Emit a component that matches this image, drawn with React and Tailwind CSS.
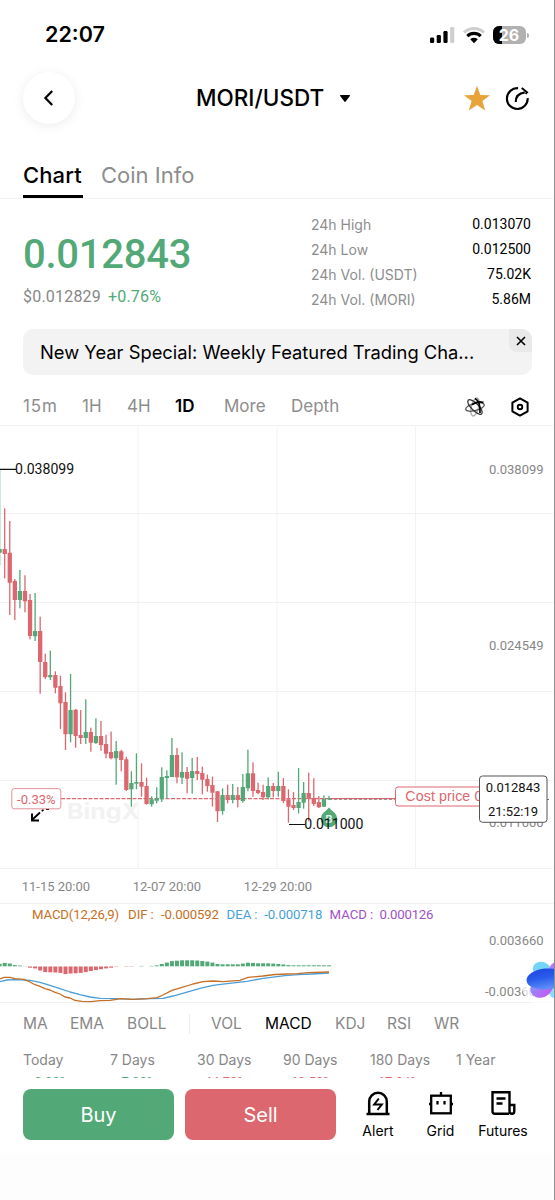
const GREEN = "#52a977";
const RED = "#dd676e";

const stats = [
  { label: "24h High", value: "0.013070" },
  { label: "24h Low", value: "0.012500" },
  { label: "24h Vol. (USDT)", value: "75.02K" },
  { label: "24h Vol. (MORI)", value: "5.86M" },
];

// [up, high, bodyTop, bodyBottom, low], in thirds of a pixel
const candles = [
  [1, 118, 357, 368, 405],
  [0, 235, 357, 372, 445],
  [0, 273, 368, 458, 555],
  [0, 447, 453, 510, 570],
  [1, 420, 483, 510, 535],
  [0, 436, 483, 514, 547],
  [0, 492, 510, 618, 628],
  [1, 489, 603, 619, 633],
  [0, 560, 603, 696, 791],
  [0, 671, 696, 742, 747],
  [1, 662, 735, 742, 750],
  [0, 724, 735, 773, 790],
  [0, 737, 768, 820, 897],
  [0, 787, 816, 913, 960],
  [1, 732, 840, 913, 937],
  [0, 837, 839, 918, 953],
  [0, 840, 915, 924, 942],
  [1, 808, 906, 924, 942],
  [0, 893, 906, 938, 965],
  [1, 865, 918, 939, 942],
  [0, 873, 918, 945, 962],
  [0, 914, 942, 971, 985],
  [0, 905, 966, 985, 988],
  [1, 933, 963, 985, 1064],
  [0, 960, 964, 990, 1024],
  [0, 980, 988, 1080, 1083],
  [1, 1024, 1059, 1078, 1130],
  [1, 970, 1056, 1061, 1078],
  [0, 1000, 1056, 1070, 1100],
  [0, 1043, 1068, 1122, 1124],
  [1, 1099, 1108, 1123, 1130],
  [1, 1072, 1105, 1112, 1120],
  [1, 1012, 1041, 1108, 1116],
  [1, 1021, 1038, 1044, 1105],
  [1, 924, 975, 1041, 1041],
  [0, 954, 975, 1042, 1060],
  [1, 967, 1026, 1043, 1062],
  [0, 1011, 1026, 1046, 1090],
  [1, 984, 1023, 1044, 1091],
  [0, 981, 1023, 1032, 1050],
  [0, 1010, 1029, 1049, 1093],
  [0, 1034, 1047, 1068, 1085],
  [0, 1040, 1065, 1088, 1130],
  [0, 1083, 1084, 1144, 1176],
  [1, 1075, 1095, 1143, 1154],
  [0, 1064, 1095, 1110, 1120],
  [1, 1062, 1095, 1110, 1120],
  [0, 1071, 1095, 1110, 1132],
  [1, 1032, 1071, 1113, 1118],
  [1, 959, 1030, 1075, 1084],
  [0, 997, 1030, 1083, 1100],
  [0, 1058, 1080, 1089, 1093],
  [0, 1064, 1086, 1102, 1110],
  [1, 1042, 1068, 1102, 1108],
  [0, 1059, 1068, 1083, 1102],
  [1, 1025, 1068, 1083, 1100],
  [0, 1044, 1068, 1113, 1120],
  [0, 1078, 1108, 1130, 1178],
  [0, 1086, 1125, 1134, 1140],
  [1, 1014, 1116, 1134, 1150],
  [1, 1056, 1089, 1118, 1136],
  [0, 1028, 1089, 1106, 1174],
  [0, 1045, 1104, 1122, 1128],
  [0, 1098, 1116, 1132, 1134],
  [1, 1096, 1107, 1130, 1130],
  [1, 1098, 1105, 1108, 1110],
];

const histogram = [
  2.5, 3.4, 2.8, 1.2, 0.8, 0.2, -1.2, -1.9, -4, -5.6, -5.8, -6, -6.4, -7.6, -7, -6.8, -6.4, -5.6,
  -4.6, -3.6, -2.7, -1.9, -1.2, -0.3, 0, -0.3, -0.3, 0, 0.4, 0, 0.4, 0.9, 2.3, 3.7, 5.2, 5.6, 6,
  6, 6, 5.8, 5.3, 4.7, 3.7, 2.3, 2, 2, 2, 2, 2.7, 3.6, 3.4, 3, 3, 3, 2.7, 2.3, 1.8, 1.2, 1, 1, 1,
  1, 1, 1, 1, 1,
];

const candleX = (i) => 4.7 + 5.067 * (i - 1);

const timeframes = [
  ["15m", "w-[59px] tracking-[0.9px]"],
  ["1H", "w-[45px]"],
  ["4H", "w-[48px]"],
  ["1D", "w-[49px] font-semibold text-black"],
  ["More", "w-[67px]"],
  ["Depth", "w-[60px]"],
];

const periods = [
  { label: "Today", value: "+0.00%", tone: "text-[#52a977]", w: "w-[87px]" },
  { label: "7 Days", value: "+7.00%", tone: "text-[#52a977]", w: "w-[87px]" },
  { label: "30 Days", value: "-44.70%", tone: "text-[#dd676e]", w: "w-[86px]" },
  { label: "90 Days", value: "-60.50%", tone: "text-[#dd676e]", w: "w-[87px]" },
  { label: "180 Days", value: "-67.04%", tone: "text-[#dd676e]", w: "w-[86px]" },
  { label: "1 Year", value: "", tone: "", w: "w-[60px]" },
];

function StatusBar() {
  return (
    <div className="flex h-[70px] items-center justify-between pr-[25px] pl-[45px]">
      <span className="text-[21.5px] leading-none font-semibold">22:07</span>
      <div className="flex items-center">
        <svg width="26" height="18" viewBox="0 0 26 18">
          <rect x="1" y="11.5" width="4.2" height="5.5" rx="1.3" />
          <rect x="7.7" y="9" width="4.2" height="8" rx="1.3" />
          <rect x="14.4" y="5" width="4.2" height="12" rx="1.3" />
          <rect x="21.1" y="1" width="4.2" height="16" rx="1.3" fill="#cfcfcf" />
        </svg>
        <svg className="ml-[7px]" width="24" height="18" viewBox="0 0 24 18" fill="none">
          <path d="M2 6.6 A14.2 14.2 0 0 1 22 6.6" stroke="#cfcfcf" strokeWidth="3" />
          <path d="M5.3 10.1 A9.6 9.6 0 0 1 18.7 10.1" stroke="#000" strokeWidth="3.1" />
          <path d="M8.2 13.2 A5.6 5.6 0 0 1 15.8 13.2 L12 17.2 Z" fill="#000" />
        </svg>
        <div className="relative ml-[7px] h-[18px] w-[33px] overflow-hidden rounded-[6px] bg-[#b1b1b1]">
          <div className="h-full w-[9px] bg-black" />
          <span className="absolute inset-0 text-center text-[16px] leading-[18px] font-bold text-white">
            26
          </span>
        </div>
        <div className="ml-[1.5px] h-[5px] w-[2px] rounded-r-full bg-[#b1b1b1]" />
      </div>
    </div>
  );
}

function Header() {
  return (
    <div className="flex h-[56px] items-center pr-[24px] pl-[23px]">
      <div className="flex size-[52px] items-center justify-center rounded-full bg-white shadow-[0_2px_12px_rgba(0,0,0,0.08)]">
        <svg width="12" height="18" viewBox="0 0 12 18" fill="none" stroke="#000" strokeWidth="2.2">
          <path d="M9.2 2 L2.400 9 L9.2 16" />
        </svg>
      </div>
      <span className="ml-[121px] w-[129px] text-[22.5px] font-medium whitespace-nowrap">
        MORI/USDT
      </span>
      <svg className="ml-[14px]" width="12" height="9" viewBox="0 0 12 9">
        <path d="M1.6 1 H10.4 Q11.4 1 10.8 1.9 L6.7 7.5 Q6 8.3 5.3 7.5 L1.2 1.9 Q.6 1 1.6 1Z" />
      </svg>
      <svg className="ml-auto" width="28" height="27" viewBox="0 0 28 27" fill="#e8a33b">
        <path d="M14 0.8 L17.3 9.9 L27 10.2 L19.4 16.1 L22.2 25.5 L14 20 L5.8 25.5 L8.6 16.1 L1 10.2 L10.7 9.9 Z" />
      </svg>
      <svg
        className="ml-[13px]"
        width="26"
        height="25"
        viewBox="0 0 27 26"
        fill="none"
        stroke="#000"
        strokeWidth="2.2"
      >
        <path d="M14.6 2.3 A10.8 10.8 0 1 0 24.6 12.6" />
        <path d="M12.2 16.6 C12.2 11 15.4 7.4 21.6 6.6" />
        <path d="M18.4 2 L24 6.6 L22.4 8.2" strokeWidth="2" />
      </svg>
    </div>
  );
}

function Tabs() {
  return (
    <div className="mt-[27px] flex h-[46px] items-stretch border-b border-[#f2f2f2] pl-[23px] text-[22px]">
      <div className="flex h-[45px] w-[60px] items-center border-b-[3px] border-black pt-[2px] font-medium whitespace-nowrap tracking-[0.1px]">
        Chart
      </div>
      <div className="ml-[18px] flex h-[42px] items-center pt-[2px] text-[#8d8d8d]">Coin Info</div>
    </div>
  );
}

function Summary() {
  return (
    <div className="flex h-[130px] justify-between pr-[23px] pl-[23px]">
      <div className="pt-[34px] font-[Roboto]">
        <div className="text-[40px] leading-[44px] font-medium tracking-[-0.25px] text-[#52a977]">
          0.012843
        </div>
        <div className="mt-[10px] text-[16px] leading-[20px] tracking-[0.2px]">
          <span className="text-[#878787]">$0.012829</span>
          <span className="ml-[7px] text-[#52a977]">+0.76%</span>
        </div>
      </div>
      <div className="w-[220px] pt-[13px] text-[14px]">
        {stats.map((s) => (
          <div key={s.label} className="flex h-[25px] items-center justify-between">
            <span className="-mt-px text-[#8d8d8d]">{s.label}</span>
            <span className="font-[Roboto]">{s.value}</span>
          </div>
        ))}
      </div>
    </div>
  );
}

function Banner() {
  return (
    <div className="mr-[22px] ml-[23px] flex h-[46px] items-start justify-between overflow-hidden rounded-[10px] bg-[#f3f3f3] pl-[17px]">
      <span className="text-[18.35px] leading-[46px] whitespace-nowrap">
        New Year Special: Weekly Featured Trading Cha...
      </span>
      <div className="flex size-[23px] items-center justify-center rounded-bl-[8px] bg-[#e9e9e9]">
        <svg width="10" height="10" viewBox="0 0 10 10" stroke="#000" strokeWidth="1.6">
          <path d="M1 1 L9 9 M9 1 L1 9" />
        </svg>
      </div>
    </div>
  );
}

function Timeframes() {
  return (
    <div className="flex h-[50px] items-center pt-[13px] pr-[24px] pl-[23px] text-[17px] text-[#8d8d8d]">
      {timeframes.map(([name, style]) => (
        <span key={name} className={style}>
          {name}
        </span>
      ))}
      <svg className="ml-auto" width="22" height="22" viewBox="0 0 22 22" fill="none">
        <ellipse cx="11" cy="11" rx="3.6" ry="9.3" stroke="#aaa" strokeWidth="1.3" transform="rotate(15 11 11)" />
        <ellipse cx="11" cy="11" rx="3.6" ry="9.6" stroke="#555" strokeWidth="1.3" transform="rotate(75 11 11)" />
        <ellipse cx="11" cy="11" rx="3.6" ry="9.6" stroke="#333" strokeWidth="1.3" transform="rotate(135 11 11)" />
        <path d="M8 8.500 Q14 4.500 19.500 6.500 M11 2.500 Q16.500 5 16 17" stroke="#000" strokeWidth="1.700" />
      </svg>
      <svg className="ml-[24px]" width="20" height="20" viewBox="0 0 20 20" fill="none" stroke="#000">
        <path d="M10 1.4 L17.6 5.7 V14.3 L10 18.6 L2.4 14.3 V5.7 Z" strokeWidth="2" strokeLinejoin="round" />
        <circle cx="10" cy="10" r="2.3" strokeWidth="1.9" />
      </svg>
    </div>
  );
}

function PriceChart() {
  return (
    <svg className="block" width="554" height="578" viewBox="0 425 554 578" fontFamily="Roboto">
      <g stroke="#f2f2f2" strokeWidth="1">
        {[425.5, 513.5, 602.5, 691.5, 780.5, 868.5, 903.5, 1002.5].map((y) => (
          <path key={y} d={`M0 ${y}H554`} />
        ))}
        {[138, 277, 415.5].map((x) => (
          <path key={x} d={`M${x} 425V869`} />
        ))}
      </g>

      <text x="67" y="819" fontFamily="Inter" fontSize="21" fontWeight="700" fill="#f2f2f2" textLength="73" lengthAdjust="spacingAndGlyphs">
        BingX
      </text>

      <path d="M61 798.6H329" stroke={RED} strokeWidth="1.1" strokeDasharray="4 1.5" />
      <path d="M329 798.6H396" stroke={RED} strokeWidth="1.2" />
      <path d="M329 799.4H396" stroke="#777" strokeWidth="0.8" strokeDasharray="3 2" />
      <path d="M546 799.5H549" stroke="#777" />

      {candles.map(([up, high, top, bottom, low], i) => {
        const x = candleX(i);
        return (
          <g key={i} fill={up ? GREEN : RED}>
            <rect x={x - 0.65} y={430 + high / 3} width="1.3" height={(low - high) / 3} />
            <rect x={x - 2.15} y={430 + top / 3} width="4.3" height={Math.max((bottom - top) / 3, 1)} rx="0.3" />
          </g>
        );
      })}

      {/* high / low marks */}
      <path d="M0 469.3H16M289 824.5H305" stroke="#111" strokeWidth="1.2" />
      <text x="15" y="474.3" fontSize="14.1" fill="#111">0.038099</text>

      {/* buy marker */}
      <path d="M329 807.5 Q331 810 334.5 812.8 A8.3 8.3 0 1 1 323.5 812.8 Q327 810 329 807.5Z" fill={GREEN} />
      <text x="329" y="822.5" fontSize="11.5" fontWeight="700" textAnchor="middle" fill="#d9f0e2">B</text>
      <text x="304.3" y="829.3" fontSize="14.1" fill="#111">0.011000</text>

      {/* change tag and expand arrow */}
      <path d="M40 812.5L33 819M32 813.5V820.5H39" stroke="#000" strokeWidth="1.9" fill="none" />
      <path d="M41.8 811.2L43.5 809.6M46 809.2H49" stroke="#000" strokeWidth="1.6" />
      <rect x="11.8" y="788.6" width="49" height="20.2" rx="2.5" fill="#fff" stroke="#e09298" />
      <text x="36.3" y="803.6" fontSize="13" textAnchor="middle" fill={RED}>-0.33%</text>

      <g fontSize="13" fill="#878787">
        <text x="489" y="474">0.038099</text>
        <text x="489" y="650">0.024549</text>
        <text x="489" y="827">0.011000</text>
        <text x="489" y="945.3">0.003660</text>
        <text x="485" y="996">-0.003660</text>
        <text x="21.7" y="891">11-15 20:00</text>
        <text x="132.7" y="891">12-07 20:00</text>
        <text x="243.7" y="891">12-29 20:00</text>
      </g>

      <path d="M485 787H398Q395.5 787 395.5 789.5V803.5Q395.5 806 398 806H485" fill="#fff" stroke={RED} />
      <text x="405.3" y="801" fontFamily="Liberation Sans" fontSize="14.2" fill={RED} textLength="77">Cost price 0</text>
      <rect x="479.5" y="776" width="67.5" height="46.3" rx="3" fill="#fff" stroke="#555" />
      <g fontSize="13" fill="#111" textAnchor="middle">
        <text x="513" y="792">0.012843</text>
        <text x="513" y="816">21:52:19</text>
      </g>

      {/* MACD pane */}
      <g fontSize="13.2">
        <text x="32" y="919" fill="#c66f25" textLength="87">MACD(12,26,9)</text>
        <text x="128" y="919" fill="#c66f25">DIF<tspan dx="3">:</tspan></text>
        <text x="161" y="919" fill="#c66f25" textLength="58">-0.000592</text>
        <text x="226.5" y="919" fill="#4a9fd8">DEA<tspan dx="3">:</tspan></text>
        <text x="264.3" y="919" fill="#4a9fd8" textLength="58">-0.000718</text>
        <text x="329.5" y="919" fill="#a052c8">MACD<tspan dx="3">:</tspan></text>
        <text x="379.5" y="919" fill="#a052c8" textLength="54">0.000126</text>
      </g>
      {histogram.map((v, i) => (
        <rect
          key={i}
          x={candleX(i) - 2}
          y={v > 0 ? 966.3 - v : 966.5}
          width="4"
          height={Math.abs(v)}
          fill={v > 0 ? GREEN : RED}
        />
      ))}
      <g fill="none" strokeWidth="1.3" strokeLinejoin="round">
        <path
          stroke="#4a9fd8"
          d="M0 981.7L7 980L15 979.7L30 980.3L40 982.3L50 985.3L60 988.7L70 992L80 994.7L90 997L100 998.3L117 998.7L133 999.3L150 998.7L163 998.3L173 996L187 992L200 988.3L213 985.3L227 983.7L247 981.3L263 978.3L285 975.6L298 974.7L312 974L329 973"
        />
        <path
          stroke="#c66f25"
          d="M0 979L4 977.3L10 977.3L15 978.7L24 979.3L30 982L35 984.7L40 986.3L45 988.7L50 990L55 992.3L60 994L65 997L70 998L75 1000.3L82 1001.3L91 1001.7L100 1000.7L110 1000.3L121 998.7L133 999.3L147 998.7L157 997.7L163 995L172 990.3L182 987.3L193 984L203 981.7L213 981L223 981.7L240 980.3L248 977.3L263 976L275 974.5L287 974L298 973.7L308 972.7L329 972"
        />
      </g>
    </svg>
  );
}

function Assistant() {
  return (
    <div className="pointer-events-none absolute top-[940px] right-0 h-[80px] w-[64px] overflow-hidden">
      <svg width="64" height="80" viewBox="490 940 64 80">
        <defs>
          <linearGradient id="orb-main" x1="0" y1="0" x2="0.2" y2="1">
            <stop offset="0" stopColor="#1f45e0" />
            <stop offset="0.5" stopColor="#2a5cec" />
            <stop offset="1" stopColor="#5f8df8" />
          </linearGradient>
          <linearGradient id="orb-low" x1="0" y1="0" x2="0.6" y2="1">
            <stop offset="0" stopColor="#7f9cff" />
            <stop offset="1" stopColor="#c35cf0" />
          </linearGradient>
        </defs>
        <circle cx="550" cy="979" r="30" fill="#fff" opacity="0.7" />
        <ellipse cx="542" cy="970" rx="9.5" ry="8" fill="#74d4f8" transform="rotate(25 542 970)" />
        <ellipse cx="555" cy="968" rx="5" ry="7" fill="#b779f3" transform="rotate(40 555 968)" />
        <ellipse cx="554" cy="991" rx="5" ry="7" fill="#8bdcfa" />
        <ellipse cx="541.5" cy="988" rx="11.500" ry="9.300" fill="url(#orb-low)" transform="rotate(-25 541.5 988)" />
        <ellipse cx="546" cy="979" rx="19.5" ry="10.500" fill="url(#orb-main)" transform="rotate(-5 546 979)" />
      </svg>
    </div>
  );
}

function Indicators() {
  return (
    <div className="flex h-[41px] items-center pl-[23px] text-[15.5px] text-[#878787]">
      <span className="w-[47px]">MA</span>
      <span className="w-[57px]">EMA</span>
      <span className="w-[62px]">BOLL</span>
      <span className="h-[20px] w-[22px] border-l border-[#eeeeee]" />
      <span className="w-[54px]">VOL</span>
      <span className="w-[70px] text-black">MACD</span>
      <span className="w-[52px]">KDJ</span>
      <span className="w-[47px]">RSI</span>
      <span>WR</span>
    </div>
  );
}

function Performance() {
  return (
    <div className="flex h-[34px] overflow-hidden pl-[23px] text-[14px] text-[#878787]">
      {periods.map((p) => (
        <div key={p.label} className={`shrink-0 ${p.w}`}>
          <div className="h-[32px] pt-[6px] leading-[20px] whitespace-nowrap">{p.label}</div>
          <div className={`pl-[4px] font-[Roboto] text-[13px] leading-[12px] ${p.tone}`}>{p.value}</div>
        </div>
      ))}
    </div>
  );
}

function BottomBar() {
  return (
    <div className="flex h-[75px] items-start bg-white pt-[11px] pl-[23px]">
      <button className="h-[51px] w-[151px] rounded-[8px] bg-[#52a977] text-[20px] text-white">
        Buy
      </button>
      <button className="ml-[11px] h-[51px] w-[151px] rounded-[8px] bg-[#dd676e] text-[20px] text-white">
        Sell
      </button>
      <div className="ml-[11px] flex text-[14px] leading-[20px]">
        <div className="flex w-[62px] flex-col items-center">
          <svg width="26" height="28" viewBox="0 0 26 28" fill="none" stroke="#000" strokeWidth="2.5">
            <path d="M1.5 25H24.5M4.2 25V12.5A8.8 8.8 0 0 1 21.8 12.5V25" />
            <path d="M13.8 9.5L9.2 15.5H16.8L12.5 21" strokeWidth="2" />
          </svg>
          <span className="mt-[4px]">Alert</span>
        </div>
        <div className="flex w-[63px] flex-col items-center">
          <svg width="26" height="28" viewBox="0 0 26 28" fill="none" stroke="#000" strokeWidth="2.3">
            <rect x="3.2" y="6.7" width="19.6" height="17.6" />
            <path d="M13 3V6.5M1 15H3M23 15H25" />
            <path d="M9.5 12V15.5M16.5 12V15.5" />
          </svg>
          <span className="mt-[4px]">Grid</span>
        </div>
        <div className="flex w-[62px] flex-col items-center">
          <svg width="26" height="28" viewBox="0 0 26 28" fill="none" stroke="#000" strokeWidth="2.4">
            <path d="M19 24.8H5Q2.5 24.8 2.5 22V3.2H19.5V22Q19.5 24.8 22 24.8Q24.3 24.8 24.3 22.3V16H19.5" />
            <path d="M6.5 9.5H15.5M6.5 14.5H12.5" />
          </svg>
          <span className="mt-[4px]">Futures</span>
        </div>
      </div>
    </div>
  );
}

export default function App() {
  return (
    <div className="relative h-[1200px] w-[555px] overflow-hidden border-r border-[#8f8f8f] bg-white font-[Inter,sans-serif] text-black">
      <StatusBar />
      <Header />
      <Tabs />
      <Summary />
      <Banner />
      <Timeframes />
      <PriceChart />
      <Indicators />
      <Performance />
      <BottomBar />
      <div className="h-[47px] bg-[#fdfdfd]" />
      <Assistant />
    </div>
  );
}
